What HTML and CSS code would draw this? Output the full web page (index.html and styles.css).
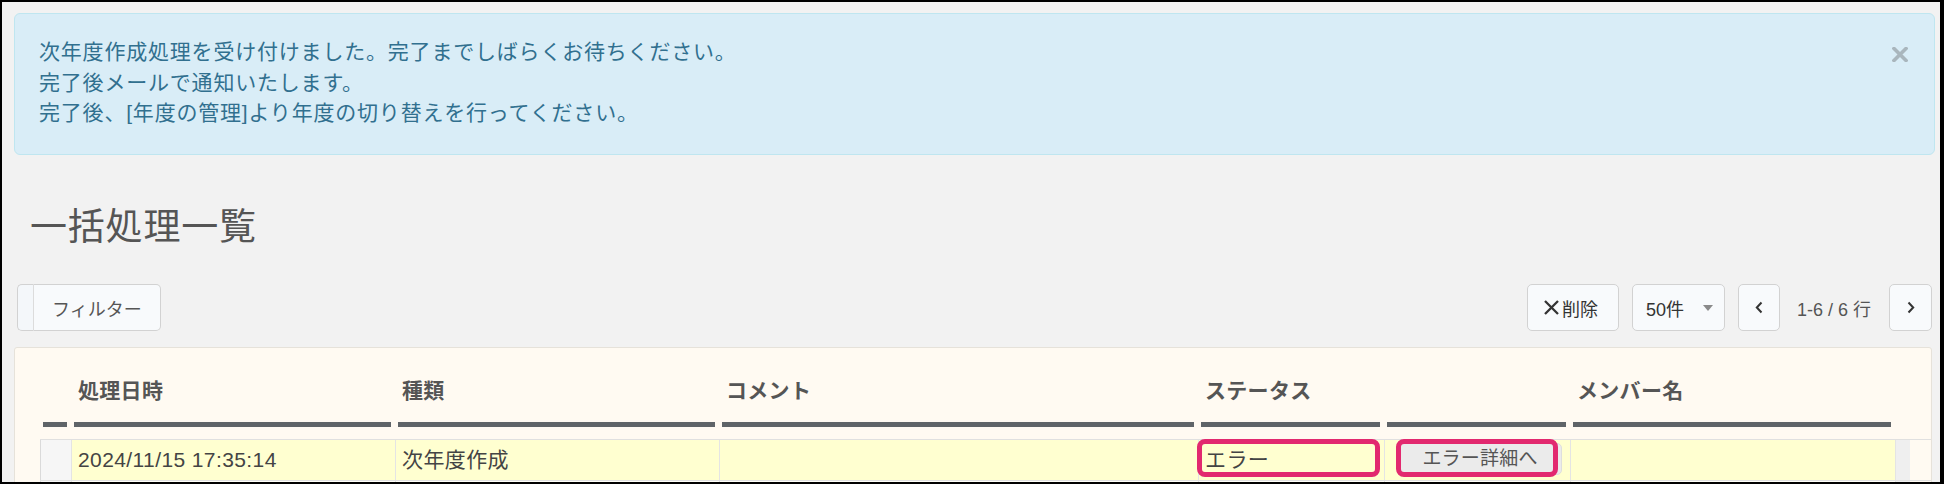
FILE: index.html
```html
<!DOCTYPE html>
<html lang="ja">
<head>
<meta charset="utf-8">
<title>一括処理一覧</title>
<link rel="stylesheet" href="styles.css">
</head>
<body>
<div class="screen">
  <div class="alert">
    <button class="close" type="button" aria-label="閉じる">
      <svg width="16" height="15" viewBox="0 0 16 15"><path d="M2 1.5 L14 13.5 M14 1.5 L2 13.5" stroke="#a9b6bd" stroke-width="3.6" stroke-linecap="square"/></svg>
    </button>
    <p class="alert-text">次年度作成処理を受け付けました。完了までしばらくお待ちください。<br>完了後メールで通知いたします。<br>完了後、[年度の管理]より年度の切り替えを行ってください。</p>
  </div>

  <h1 class="title">一括処理一覧</h1>

  <div class="toolbar">
    <div class="filter-group">
      <span class="filter-handle"></span>
      <button class="btn filter" type="button">フィルター</button>
    </div>
    <div class="tools">
      <button class="btn del" type="button">
        <svg class="del-x" width="17" height="17" viewBox="0 0 17 17"><path d="M2 2 L15 15 M15 2 L2 15" stroke="#333" stroke-width="2.3"/></svg>削除
      </button>
      <div class="btn select">50件<svg class="caret" width="10" height="6" viewBox="0 0 10 6"><path d="M0 0 H10 L5 6 Z" fill="#8a8a8a"/></svg></div>
      <button class="btn pager prev" type="button"><svg width="8" height="13" viewBox="0 0 8 13"><path d="M6.5 1.5 L1.8 6.5 L6.5 11.5" stroke="#333" stroke-width="2" fill="none"/></svg></button>
      <span class="count">1-6 / 6 行</span>
      <button class="btn pager next" type="button"><svg width="8" height="13" viewBox="0 0 8 13"><path d="M1.5 1.5 L6.2 6.5 L1.5 11.5" stroke="#333" stroke-width="2" fill="none"/></svg></button>
    </div>
  </div>

  <div class="panel">
    <div class="grid thead">
      <div class="th"><span class="th-label"></span><span class="bar"></span></div>
      <div class="th"><span class="th-label">処理日時</span><span class="bar"></span></div>
      <div class="th"><span class="th-label">種類</span><span class="bar"></span></div>
      <div class="th"><span class="th-label">コメント</span><span class="bar"></span></div>
      <div class="th"><span class="th-label">ステータス</span><span class="bar"></span></div>
      <div class="th"><span class="th-label"></span><span class="bar"></span></div>
      <div class="th"><span class="th-label">メンバー名</span><span class="bar"></span></div>
      <div class="th th-empty"></div>
    </div>
    <div class="grid row">
      <div class="td td-check"></div>
      <div class="td">2024/11/15 17:35:14</div>
      <div class="td">次年度作成</div>
      <div class="td"></div>
      <div class="td td-status">エラー<span class="mark mark-status"></span></div>
      <div class="td td-action"><button class="err-btn" type="button">エラー詳細へ</button><span class="mark mark-action"></span></div>
      <div class="td"></div>
      <div class="td td-scroll"></div>
    </div>
    <div class="grid row row-2">
      <div class="td td-check"></div>
      <div class="td"></div>
      <div class="td"></div>
      <div class="td"></div>
      <div class="td"></div>
      <div class="td"></div>
      <div class="td"></div>
      <div class="td td-scroll"></div>
    </div>
  </div>
</div>
</body>
</html>
```

FILE: styles.css
```css
html, body {
  margin: 0;
  padding: 0;
  background: #000;
}

body {
  width: 1944px;
  height: 484px;
  overflow: hidden;
  font-family: "Liberation Sans", "Noto Sans CJK JP", sans-serif;
}

.screen {
  box-sizing: border-box;
  width: 1938px;
  height: 480px;
  margin: 2px 0 0 2px;
  background: #f2f2f2;
  overflow: hidden;
  display: flex;
  flex-direction: column;
}

/* alert */
.alert {
  position: relative;
  box-sizing: border-box;
  width: 1921px;
  height: 142px;
  margin: 11px 0 0 12px;
  padding: 23px 60px 25px 24px;
  background: #d9edf7;
  border: 1px solid #bfe6f0;
  border-radius: 6px;
  color: #31708f;
  flex: none;
}

.alert-text {
  margin: 0;
  font-size: 21px;
  line-height: 30.5px;
  letter-spacing: 0.8px;
}

.close {
  position: absolute;
  top: 33px;
  right: 26px;
  width: 16px;
  height: 15px;
  padding: 0;
  border: 0;
  background: none;
  display: block;
}

.close svg { display: block; }

/* title */
.title {
  margin: 53px 0 0 28px;
  font-size: 37px;
  line-height: 40px;
  font-weight: 400;
  letter-spacing: 0.8px;
  color: #555;
  flex: none;
}

/* toolbar */
.toolbar {
  display: flex;
  justify-content: space-between;
  align-items: center;
  width: 1915px;
  height: 47px;
  margin: 36px 0 0 15px;
  flex: none;
}

.btn {
  box-sizing: border-box;
  height: 47px;
  display: flex;
  align-items: center;
  background: #f8fafc;
  border: 1px solid #d2d2d2;
  border-radius: 5px;
  font-family: inherit;
  font-size: 18px;
  color: #333;
  padding: 0;
}

.filter-group {
  display: flex;
  height: 47px;
}

.filter-handle {
  box-sizing: border-box;
  width: 17px;
  height: 47px;
  background: #f4f7fa;
  border: 1px solid #d2d2d2;
  border-right: 1px solid #dcdcdc;
  border-radius: 5px 0 0 5px;
}

.filter {
  width: 127px;
  padding-left: 18px;
  border-left: 0;
  border-radius: 0 5px 5px 0;
  color: #555;
}

.tools {
  display: flex;
  align-items: center;
}

.del {
  width: 92px;
  padding-left: 15px;
}

.del-x {
  margin-right: 2px;
  display: block;
}

.select {
  width: 93px;
  margin-left: 13px;
  padding-left: 13px;
}

.caret {
  margin-left: 19px;
  display: block;
}

.pager {
  width: 42px;
  justify-content: center;
  margin-left: 13px;
}

.pager svg { display: block; }

.next {
  width: 43px;
  margin-left: 0;
}

.count {
  width: 109px;
  padding-left: 17px;
  box-sizing: border-box;
  font-size: 18px;
  color: #555;
}

/* panel */
.panel {
  box-sizing: border-box;
  width: 1918px;
  margin: 16px 0 0 12px;
  padding-left: 25px;
  background: #fffaf2;
  border: 1px solid #e6e2da;
  border-radius: 3px;
  flex: none;
}

.grid {
  display: grid;
  grid-template-columns: 31px 324px 324px 479px 186px 186px 325px 15px;
}

.th {
  display: flex;
  flex-direction: column;
  padding-top: 28px;
}

.th-label {
  height: 30px;
  padding-left: 7px;
  font-size: 21px;
  line-height: 30px;
  font-weight: 700;
  letter-spacing: 0.3px;
  color: #555;
  white-space: nowrap;
}

.bar {
  height: 5px;
  margin: 16px 4px 12px 3px;
  background: #5f6468;
}

.row {
  border-top: 1px solid #e0e0e0;
  height: 40px;
}

.td {
  position: relative;
  box-sizing: border-box;
  height: 40px;
  padding-left: 6px;
  border-left: 1px solid #e4e4e4;
  background: #ffffd0;
  font-size: 21px;
  line-height: 40px;
  letter-spacing: 0.4px;
  color: #444;
  white-space: nowrap;
}

.td-check {
  background: #f6f6f6;
  border-left-color: #dadada;
}

.td-scroll {
  background: #efefef;
  border-left-color: #e4e4e4;
}

.row-2 .td { background: #fffef8; }
.row-2 .td-check { background: #f6f6f6; }
.row-2 .td-scroll { background: #efefef; }

.td-action {
  padding-left: 13px;
}

.err-btn {
  box-sizing: border-box;
  width: 164px;
  height: 32px;
  margin-top: 3px;
  display: block;
  background: #ebebeb;
  border: 1px solid #dedede;
  border-radius: 5px;
  font-family: inherit;
  font-size: 19px;
  line-height: 30px;
  letter-spacing: 0.2px;
  color: #555;
  padding: 0;
}

/* annotation outlines */
.mark {
  position: absolute;
  box-sizing: border-box;
  top: -1px;
  height: 38px;
  border: 5px solid #e2296f;
  border-radius: 8px;
}

.mark-status {
  left: -2px;
  width: 183px;
}

.mark-action {
  left: 11px;
  width: 162px;
}
```
